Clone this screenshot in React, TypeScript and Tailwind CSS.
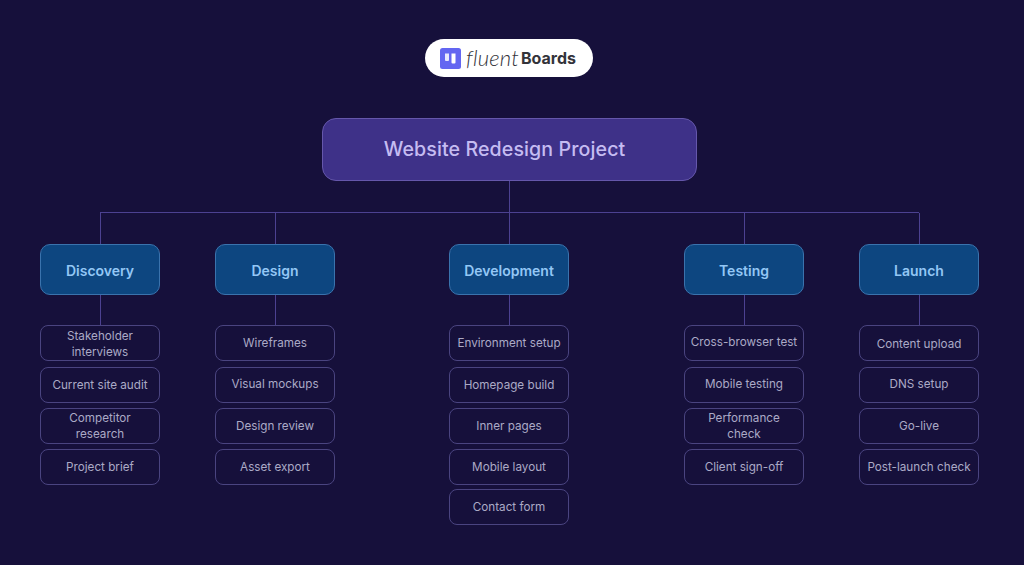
const phases = [
  {
    title: "Discovery",
    left: "ml-[40px]",
    items: [
      { label: "Stakeholder interviews", gap: "mt-0", nudge: "pt-[1px]", wrap: "w-[90px]" },
      { label: "Current site audit", gap: "mt-[6px]", nudge: "pb-0", wrap: "" },
      { label: "Competitor research", gap: "mt-[5px]", nudge: "pb-0", wrap: "w-[90px]" },
      { label: "Project brief", gap: "mt-[5px]", nudge: "pb-0", wrap: "" },
    ],
  },
  {
    title: "Design",
    left: "ml-[55px]",
    items: [
      { label: "Wireframes", gap: "mt-0", nudge: "pb-[1px]", wrap: "" },
      { label: "Visual mockups", gap: "mt-[6px]", nudge: "pb-[2px]", wrap: "" },
      { label: "Design review", gap: "mt-[5px]", nudge: "pb-0", wrap: "" },
      { label: "Asset export", gap: "mt-[5px]", nudge: "pb-0", wrap: "" },
    ],
  },
  {
    title: "Development",
    left: "ml-[114px]",
    items: [
      { label: "Environment setup", gap: "mt-0", nudge: "pb-0", wrap: "" },
      { label: "Homepage build", gap: "mt-[6px]", nudge: "pb-0", wrap: "" },
      { label: "Inner pages", gap: "mt-[5px]", nudge: "pb-0", wrap: "" },
      { label: "Mobile layout", gap: "mt-[5px]", nudge: "pb-0", wrap: "" },
      { label: "Contact form", gap: "mt-[4px]", nudge: "pb-0", wrap: "" },
    ],
  },
  {
    title: "Testing",
    left: "ml-[115px]",
    items: [
      { label: "Cross-browser test", gap: "mt-0", nudge: "pb-[3px]", wrap: "" },
      { label: "Mobile testing", gap: "mt-[6px]", nudge: "pb-[2px]", wrap: "" },
      { label: "Performance check", gap: "mt-[5px]", nudge: "pb-0", wrap: "w-[90px]" },
      { label: "Client sign-off", gap: "mt-[5px]", nudge: "pb-0", wrap: "" },
    ],
  },
  {
    title: "Launch",
    left: "ml-[55px]",
    items: [
      { label: "Content upload", gap: "mt-0", nudge: "pt-[1px]", wrap: "" },
      { label: "DNS setup", gap: "mt-[6px]", nudge: "pb-[2px]", wrap: "" },
      { label: "Go-live", gap: "mt-[5px]", nudge: "pb-0", wrap: "" },
      { label: "Post-launch check", gap: "mt-[5px]", nudge: "pb-0", wrap: "" },
    ],
  },
];

const App = () => {
  return (
    <div className="h-[565px] w-[1024px] overflow-hidden bg-[#16103b] font-['Inter','Noto_Sans',sans-serif]">
      <div className="flex w-[1019px] flex-col items-center pt-[39px]">
        <div className="mr-[1px] flex h-[38px] w-[168px] items-center rounded-full bg-white pl-[15px]">
          <svg width="21" height="21" viewBox="0 0 21 21">
            <rect width="21" height="21" rx="2.5" fill="#6366f1" />
            <path d="M5 5.5h4v6.5a1 1 0 0 1-1 1H6a1 1 0 0 1-1-1z" fill="#fff" opacity="0.85" />
            <path d="M11.5 5.5h4v9a1 1 0 0 1-1 1h-2a1 1 0 0 1-1-1z" fill="#fff" />
          </svg>
          <span className="ml-[5px] font-['Lato',sans-serif] text-[22px] font-light italic leading-none tracking-[0.2px] text-[#33333a]">
            fluent
          </span>
          <span className="ml-[2px] text-[16px] font-bold leading-none text-[#33333a]">Boards</span>
        </div>

        <div className="mt-[41px] flex h-[63px] w-[375px] items-center justify-center rounded-[14px] border border-[#6557ab] bg-[#3e3188] pr-[10px]">
          <span className="text-[19.6px] font-medium leading-none tracking-[0.1px] text-[#c5bcf2]">
            Website Redesign Project
          </span>
        </div>
        <div className="h-[31px] w-px bg-[#4c4191]" />
      </div>

      <div className="ml-[100px] h-px w-[819px] bg-[#4c4191]" />

      <div className="flex items-start">
        {phases.map((phase) => (
          <div key={phase.title} className={`flex w-[120px] flex-col items-center ${phase.left}`}>
            <div className="h-[31px] w-px bg-[#4c4191]" />
            <div className="flex h-[51px] w-[120px] items-center justify-center rounded-[10px] border border-[#3a73ad] bg-[#0d4680] pt-[2px]">
              <span className="text-[14px] font-semibold leading-none text-[#93c7f5]">{phase.title}</span>
            </div>
            <div className="h-[30px] w-px bg-[#4c4191]" />
            {phase.items.map((item) => (
              <div
                key={item.label}
                className={`flex h-[36px] w-[120px] items-center justify-center rounded-[8px] border border-[#4a4480] text-center text-[11.7px] leading-[16px] text-[#abaac6] ${item.gap} ${item.nudge}`}
              >
                <span className={item.wrap}>{item.label}</span>
              </div>
            ))}
          </div>
        ))}
      </div>
    </div>
  );
};

export default App;
